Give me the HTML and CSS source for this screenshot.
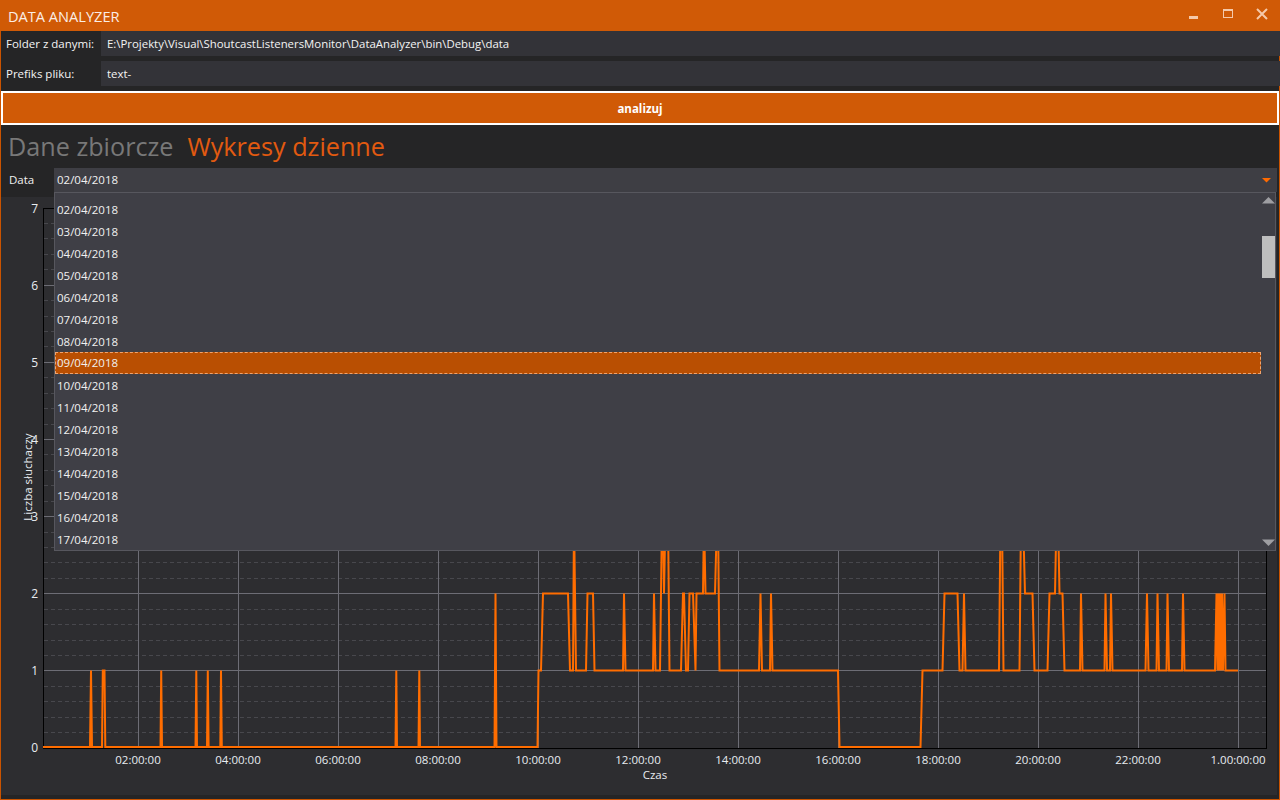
FILE: index.html
```html
<!DOCTYPE html>
<html lang="pl">
<head>
<meta charset="utf-8">
<title>Data Analyzer</title>
<link rel="stylesheet" href="styles.css">
</head>
<body>
<div class="titlebar">
  <span class="title">DATA ANALYZER</span>
  <div class="controls">
    <svg class="ctl" width="20" height="20" viewBox="0 0 20 20"><rect x="5" y="8" width="9" height="3" fill="currentColor"/></svg>
    <svg class="ctl" width="20" height="20" viewBox="0 0 20 20"><rect x="5.5" y="1.5" width="9" height="8" fill="none" stroke="currentColor"/><rect x="5" y="1" width="10" height="2" fill="currentColor"/></svg>
    <svg class="ctl" width="20" height="20" viewBox="0 0 20 20"><path d="M5 1L15 11M15 1L5 11" stroke="currentColor" stroke-width="2"/></svg>
  </div>
</div>
<div class="content">
  <div class="row">
    <span class="lbl">Folder z danymi:</span>
    <div class="field">E:\Projekty\Visual\ShoutcastListenersMonitor\DataAnalyzer\bin\Debug\data</div>
  </div>
  <div class="row row2">
    <span class="lbl">Prefiks pliku:</span>
    <div class="field">text-</div>
  </div>
  <div class="btn">analizuj</div>
  <div class="tabs">
    <span class="tab">Dane zbiorcze</span>
    <span class="tab active">Wykresy dzienne</span>
  </div>
  <div class="datarow">
    <span class="dlbl">Data</span>
    <div class="combo">
      <span class="combo-text">02/04/2018</span>
      <svg class="combo-arrow" width="9" height="5" viewBox="0 0 9 5"><path d="M0 0H9L4.5 4.5Z" fill="#ff6a00"/></svg>
      <div class="dropdown">
        <div class="list">
          <div class="item first">01/04/2018</div>
          <div class="item">02/04/2018</div>
          <div class="item">03/04/2018</div>
          <div class="item">04/04/2018</div>
          <div class="item">05/04/2018</div>
          <div class="item">06/04/2018</div>
          <div class="item">07/04/2018</div>
          <div class="item">08/04/2018</div>
          <div class="item selected">09/04/2018</div>
          <div class="item">10/04/2018</div>
          <div class="item">11/04/2018</div>
          <div class="item">12/04/2018</div>
          <div class="item">13/04/2018</div>
          <div class="item">14/04/2018</div>
          <div class="item">15/04/2018</div>
          <div class="item">16/04/2018</div>
          <div class="item">17/04/2018</div>
        </div>
        <div class="scrollbar">
          <svg class="sb-arrow" width="13" height="7" viewBox="0 0 13 7"><path d="M0 6.5L6.5 0L13 6.5Z" fill="#9e9ea2"/></svg>
          <div class="sb-track"><div class="sb-thumb"></div></div>
          <svg class="sb-arrow" width="13" height="7" viewBox="0 0 13 7"><path d="M0 0.5L6.5 7L13 0.5Z" fill="#9e9ea2"/></svg>
        </div>
      </div>
    </div>
  </div>
  <div class="chart">
    <svg class="plot" width="1275" height="598" viewBox="1 197 1275 598">
      <path class="minor" d="M44 732.5H1266M44 717.5H1266M44 701.5H1266M44 686.5H1266M44 655.5H1266M44 640.5H1266M44 624.5H1266M44 609.5H1266M44 578.5H1266M44 562.5H1266M44 547.5H1266M44 532.5H1266M44 501.5H1266M44 485.5H1266M44 470.5H1266M44 454.5H1266M44 424.5H1266M44 408.5H1266M44 393.5H1266M44 377.5H1266M44 346.5H1266M44 331.5H1266M44 316.5H1266M44 300.5H1266M44 269.5H1266M44 254.5H1266M44 238.5H1266M44 223.5H1266"/>
      <path class="major" d="M44 670.5H1266M44 593.5H1266M44 516.5H1266M44 439.5H1266M44 362.5H1266M44 285.5H1266M138.5 209V748M238.5 209V748M338.5 209V748M438.5 209V748M538.5 209V748M638.5 209V748M738.5 209V748M838.5 209V748M938.5 209V748M1038.5 209V748M1138.5 209V748M1238.5 209V748"/>
      <rect class="frame" x="43.5" y="208.5" width="1223" height="540"/>
      <polyline class="data" points="43,747 90,747 91,670.5 92,747 102,747 102.8,670.5 104.5,670.5 105.3,747 160.5,747 161.2,670.5 162,747 195.5,747 196.3,670.5 197,747 207,747 207.8,670.5 208.6,747 220.3,747 221,670.5 221.8,747 395.5,747 396.3,670.5 397,747 418.5,747 419.3,670.5 420,747 494.5,747 495.5,593.5 496.5,747 537.5,747 538.5,670.5 541,670.5 543,593.5 568,593.5 570,670.5 573,670.5 574,516 576,670.5 586,670.5 587.5,593.5 593,593.5 594.5,670.5 623,670.5 624,593.5 625.5,670.5 653,670.5 654,593.5 655.5,670.5 660,670.5 662,516 663,516 664,593.5 665.5,516 668,516 669.5,670.5 681,670.5 683,593.5 684,593.5 686,670.5 688,670.5 689.5,593.5 693,593.5 695.5,670.5 696.5,593.5 703,593.5 704,516 705.5,593.5 715,593.5 717,516 718,516 719.5,670.5 759,670.5 760.5,593.5 762,670.5 770,670.5 771,593.5 772.5,670.5 838,670.5 839.5,747 920.5,747 922.5,670.5 942.5,670.5 944.5,593.5 957.5,593.5 959.5,670.5 962.5,670.5 964,593.5 965.5,670.5 999,670.5 1000.5,516 1002,516 1003.5,670.5 1019.5,670.5 1021,516 1023,516 1025,593.5 1032.5,593.5 1034.5,670.5 1047.5,670.5 1049.5,593.5 1055,593.5 1056.5,516 1058,516 1059.5,593.5 1062.5,593.5 1064.5,670.5 1080,670.5 1081,593.5 1082.5,670.5 1104.5,670.5 1105.5,593.5 1107,670.5 1110,670.5 1111,593.5 1112.5,670.5 1145.5,670.5 1147,593.5 1148.5,670.5 1156.5,670.5 1157.5,593.5 1159,670.5 1166.5,670.5 1167.5,593.5 1169,670.5 1182,670.5 1183,593.5 1184.5,670.5 1215,670.5 1216.5,593.5 1217.5,670.5 1218.5,593.5 1219.5,670.5 1220.5,593.5 1221.5,670.5 1222,593.5 1223,670.5 1224.5,593.5 1225.5,670.5 1238,670.5"/>
      <g class="ylabels">
        <text x="38" y="752">0</text>
        <text x="38" y="675">1</text>
        <text x="38" y="598">2</text>
        <text x="38" y="521">3</text>
        <text x="38" y="444">4</text>
        <text x="38" y="367">5</text>
        <text x="38" y="290">6</text>
        <text x="38" y="213">7</text>
      </g>
      <g class="xlabels">
        <text x="138" y="764">02:00:00</text>
        <text x="238" y="764">04:00:00</text>
        <text x="338" y="764">06:00:00</text>
        <text x="438" y="764">08:00:00</text>
        <text x="538" y="764">10:00:00</text>
        <text x="638" y="764">12:00:00</text>
        <text x="738" y="764">14:00:00</text>
        <text x="838" y="764">16:00:00</text>
        <text x="938" y="764">18:00:00</text>
        <text x="1038" y="764">20:00:00</text>
        <text x="1138" y="764">22:00:00</text>
        <text x="1238" y="764">1.00:00:00</text>
        <text x="655" y="779">Czas</text>
      </g>
      <text class="ytitle" transform="translate(32 477) rotate(-90)">Liczba słuchaczy</text>
    </svg>
  </div>
</div>
</body>
</html>
```
FILE: styles.css
```css
html, body {
  margin: 0;
  padding: 0;
}
body {
  width: 1280px;
  height: 800px;
  overflow: hidden;
  background: #252526;
  font-family: "Open Sans", "Noto Sans", sans-serif;
  color: #f1f1f1;
  font-size: 12px;
}
.titlebar {
  height: 31px;
  background: #d05a06;
  display: flex;
  align-items: center;
  justify-content: space-between;
}
.title {
  font-size: 14.6px;
  color: #fbeee5;
  padding-left: 8px;
}
.controls {
  display: flex;
  align-items: center;
  gap: 14px;
  padding-right: 8px;
  padding-top: 8px;
  align-self: flex-start;
  color: #f5c9aa;
}
.ctl {
  display: block;
}
.content {
  height: 769px;
  box-sizing: border-box;
  border-left: 1px solid #ca5300;
  border-right: 1px solid #ca5300;
  border-bottom: 1px solid #ca5300;
  display: flex;
  flex-direction: column;
}
.row {
  height: 25px;
  display: flex;
  margin: 0 -1px;
}
.row2 {
  margin-top: 5px;
}
.lbl {
  width: 101px;
  box-sizing: border-box;
  padding-left: 6px;
  line-height: 25px;
  font-size: 11.5px;
  color: #f4f4f4;
}
.field {
  flex: 1;
  background: #333338;
  line-height: 25px;
  padding-left: 6px;
  font-size: 11.4px;
  color: #f4f4f4;
}
.btn {
  margin-top: 5px;
  height: 34px;
  box-sizing: border-box;
  border: 2px solid #ffffff;
  background: #d05a06;
  color: #ffffff;
  font-weight: 700;
  font-size: 11.5px;
  display: flex;
  align-items: center;
  justify-content: center;
}
.tabs {
  height: 43px;
  box-sizing: border-box;
  padding-top: 6px;
  padding-left: 7px;
  display: flex;
  gap: 14px;
}
.tab {
  font-size: 25.2px;
  line-height: 30px;
  color: #787878;
}
.tab.active {
  color: #e25a10;
}
.datarow {
  height: 24px;
  display: flex;
}
.dlbl {
  width: 53px;
  box-sizing: border-box;
  padding-left: 8px;
  line-height: 24px;
  font-size: 11.5px;
}
.combo {
  position: relative;
  flex: 1;
  margin-right: 2px;
  background: #3e3e44;
  display: flex;
  align-items: center;
  justify-content: space-between;
  padding: 0 6px 0 3px;
}
.combo-text {
  font-size: 11.5px;
  line-height: 24px;
}
.combo-arrow {
  display: block;
  margin-top: 1px;
}
.dropdown {
  position: absolute;
  left: 0;
  top: 24px;
  width: 1222px;
  height: 359px;
  box-sizing: border-box;
  background: #3f3f46;
  border: 1px solid #57575e;
  display: flex;
  z-index: 5;
}
.list {
  flex: 1;
  overflow: hidden;
  padding-right: 1px;
}
.item {
  height: 22px;
  line-height: 22px;
  padding-left: 2px;
  padding-top: 1px;
  font-size: 11.5px;
  color: #f1f1f1;
  box-sizing: border-box;
  line-height: 21px;
}
.item.first {
  margin-top: -17px;
}
.item.selected {
  background: #b94f02;
  border: 1px dashed #f0a46e;
  padding-top: 0;
  line-height: 20px;
  padding-left: 1px;
}
.scrollbar {
  width: 13px;
  display: flex;
  flex-direction: column;
  padding: 4px 0 4px 0;
}
.sb-arrow {
  display: block;
}
.sb-track {
  flex: 1;
  padding-top: 32px;
}
.sb-thumb {
  height: 42px;
  background: #bebebe;
}
.chart {
  margin-top: 5px;
  margin-right: 2px;
  height: 598px;
  background: #2d2d30;
  overflow: hidden;
}
.plot {
  display: block;
}
.minor {
  stroke: #48484d;
  stroke-width: 1;
  stroke-dasharray: 4 3;
  fill: none;
}
.major {
  stroke: #6d6d75;
  stroke-width: 1;
  fill: none;
}
.frame {
  fill: none;
  stroke: #000000;
  stroke-width: 1;
}
.data {
  fill: none;
  stroke: #ff6d00;
  stroke-width: 2;
  stroke-linejoin: miter;
  stroke-miterlimit: 2;
}
.ylabels text {
  font-family: "Open Sans", sans-serif;
  font-size: 12px;
  fill: #e8ecf0;
  text-anchor: end;
}
.xlabels text {
  font-family: "Open Sans", sans-serif;
  font-size: 11.5px;
  fill: #e8ecf0;
  text-anchor: middle;
}
.ytitle {
  font-family: "Open Sans", sans-serif;
  font-size: 11.5px;
  fill: #e8ecf0;
  text-anchor: middle;
}
```
